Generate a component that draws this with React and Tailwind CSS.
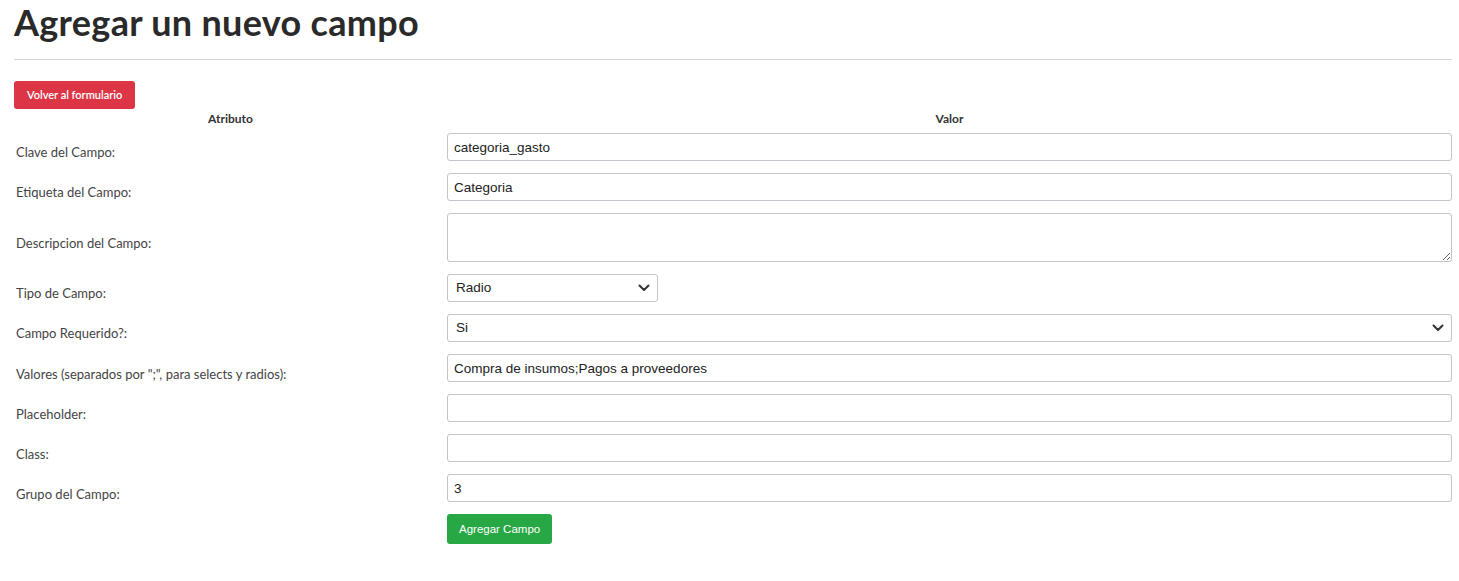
import { useState } from 'react';

const rows = [
  { label: 'Clave del Campo:', type: 'text', value: 'categoria_gasto' },
  { label: 'Etiqueta del Campo:', type: 'text', value: 'Categoria' },
  { label: 'Descripcion del Campo:', type: 'textarea', value: '' },
  { label: 'Tipo de Campo:', type: 'select-small', value: 'Radio', options: ['Text', 'Textarea', 'Select', 'Radio', 'Checkbox'] },
  { label: 'Campo Requerido?:', type: 'select', value: 'Si', options: ['Si', 'No'] },
  { label: 'Valores (separados por ";", para selects y radios):', type: 'text', value: 'Compra de insumos;Pagos a proveedores' },
  { label: 'Placeholder:', type: 'text', value: '' },
  { label: 'Class:', type: 'text', value: '' },
  { label: 'Grupo del Campo:', type: 'text', value: '3' },
];

const Chevron = () => (
  <svg className="pointer-events-none absolute right-[8px] top-1/2 -translate-y-1/2" width="12" height="8" viewBox="0 0 12 8" fill="none">
    <path d="M1.5 1.5 L6 6 L10.5 1.5" stroke="#333" strokeWidth="2" strokeLinecap="round" strokeLinejoin="round" />
  </svg>
);

const App = () => {
  const [values, setValues] = useState(rows.map(r => r.value));

  const update = (i, v) => setValues(prev => prev.map((x, j) => (j === i ? v : x)));

  const inputCls = "w-full h-[28px] border border-[#c4c4cc] rounded-[3px] px-[6px] text-[13.5px] text-[#222] bg-white outline-none font-['Liberation_Sans',Arial,sans-serif]";

  return (
    <div className="px-[14px] bg-white min-h-[581px] font-['Lato','Noto_Sans',sans-serif] text-[#333]">
      <h1 className="text-[36px] font-bold leading-[44px] text-[#2a2a2a] tracking-[0.3px]">Agregar un nuevo campo</h1>
      <hr className="mt-[15px] border-t border-[#d6d6d6] w-[1438px]" />

      <button className="mt-[21px] h-[28px] px-[13px] bg-[#dc3545] text-white text-[11px] font-semibold rounded-[3px]">
        Volver al formulario
      </button>

      {/* Fields table */}
      <table className="w-[1438px] border-collapse">
        <thead>
          <tr>
            <th className="w-[433px] text-[12px] font-bold h-[17px] leading-[17px] pt-[1px] text-center">Atributo</th>
            <th className="text-[12px] font-bold h-[17px] leading-[17px] pt-[1px] text-center">Valor</th>
          </tr>
        </thead>
        <tbody>
          {rows.map((row, i) => (
            <tr key={row.label}>
              <td className="text-[13px] text-[#444] align-middle pt-[12px] pl-[2px]">{row.label}</td>
              <td className="py-[6px]">
                {row.type === 'text' && (
                  <input
                    type="text"
                    value={values[i]}
                    onChange={(e) => update(i, e.target.value)}
                    className={inputCls}
                  />
                )}
                {row.type === 'textarea' && (
                  <textarea
                    value={values[i]}
                    onChange={(e) => update(i, e.target.value)}
                    className="block w-full h-[49px] border border-[#c4c4cc] rounded-[3px] px-[6px] text-[13.5px] bg-white outline-none font-['Liberation_Sans',Arial,sans-serif]"
                  />
                )}
                {(row.type === 'select' || row.type === 'select-small') && (
                  <div className={row.type === 'select-small' ? 'relative w-[211px]' : 'relative w-full'}>
                    <select
                      value={values[i]}
                      onChange={(e) => update(i, e.target.value)}
                      className="appearance-none w-full h-[28px] border border-[#c4c4cc] rounded-[3px] px-[8px] text-[13.5px] text-[#222] bg-white outline-none font-['Liberation_Sans',Arial,sans-serif]"
                    >
                      {row.options.map(o => (
                        <option key={o} value={o}>{o}</option>
                      ))}
                    </select>
                    <Chevron />
                  </div>
                )}
              </td>
            </tr>
          ))}
          <tr>
            <td></td>
            <td className="pt-[6px]">
              <button className="h-[30px] px-[12px] bg-[#28a745] text-white text-[11.5px] rounded-[3px] font-['Liberation_Sans',Arial,sans-serif]">
                Agregar Campo
              </button>
            </td>
          </tr>
        </tbody>
      </table>
    </div>
  );
};

export default App;
